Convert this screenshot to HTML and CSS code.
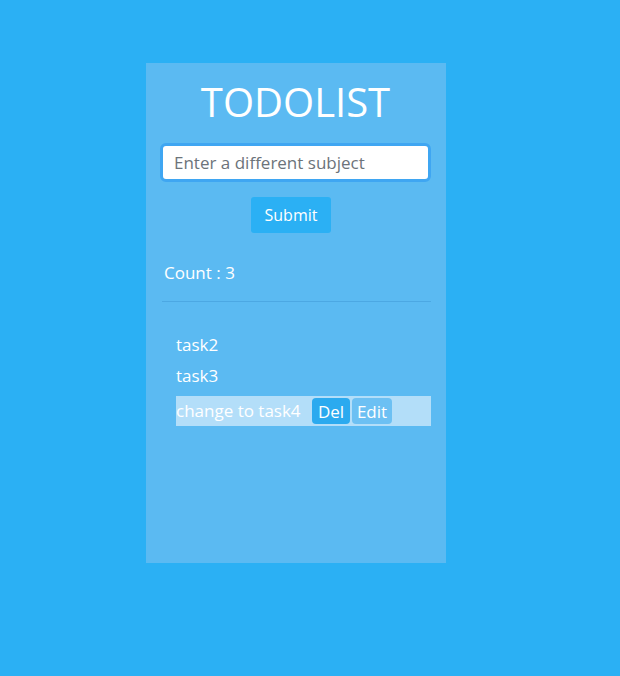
FILE: index.html
```html
<!DOCTYPE html>
<html>
<head>
<meta charset="utf-8">
<link rel="stylesheet" href="styles.css">
</head>
<body>
<div class="card">
  <h1 class="title">TODOLIST</h1>
  <input class="subject" type="text" placeholder="Enter a different subject">
  <div class="actions"><button class="btn btn-submit">Submit</button></div>
  <p class="count">Count : 3</p>
  <hr class="divider">
  <ul class="tasks">
    <li class="task">task2</li>
    <li class="task">task3</li>
    <li class="task task-active">change to task4 <button class="btn btn-del">Del</button><button class="btn btn-edit">Edit</button></li>
  </ul>
</div>
</body>
</html>
```
FILE: styles.css
```css
html, body {
  margin: 0;
  padding: 0;
  background: #2bb0f4;
  font-family: "Open Sans", sans-serif;
  height: 100%;
}
body {
  padding-top: 63px;
  box-sizing: border-box;
}
.card {
  width: 300px;
  height: 500px;
  margin-left: 146px;
  background: #5bbaf2;
  box-sizing: border-box;
  padding: 14px 15px 0 14px;
  color: #fff;
}
.title {
  margin: 0;
  text-align: center;
  font-size: 40px;
  font-weight: 400;
  line-height: 50px;
  height: 52px;
}
.subject {
  display: block;
  width: 271px;
  height: 39px;
  box-sizing: border-box;
  border: 3px solid #3fa6f2;
  border-radius: 6px;
  padding: 0 11px;
  font-family: inherit;
  font-size: 17px;
  outline: none;
  margin: 14px 0 0 0;
}
.subject::placeholder {
  color: #6c737a;
}
.actions {
  display: flex;
  justify-content: center;
  margin-top: 15px;
  padding-right: 9px;
}
.btn {
  font-family: inherit;
  border: none;
  color: #fff;
  cursor: pointer;
}
.btn-submit {
  background: #2bb0f4;
  width: 80px;
  height: 36px;
  border-radius: 3px;
  font-size: 16px;
}
.count {
  margin: 30px 0 0 4px;
  font-size: 17px;
  line-height: 20px;
}
.divider {
  margin: 18px 0 0 2px;
  border: none;
  border-top: 1px solid #4ca8e3;
  height: 0;
}
.tasks {
  list-style: none;
  margin: 32px 0 0 0;
  padding: 0 0 0 16px;
}
.task {
  font-size: 17px;
  line-height: 22px;
  margin-bottom: 9px;
}
.task-active {
  background: #b3def9;
  height: 30px;
  display: flex;
  align-items: center;
  white-space: pre;
}
.btn-del, .btn-edit {
  height: 26px;
  border-radius: 4px;
  font-size: 17px;
  padding: 0;
  margin-right: 2px;
}
.btn-del {
  background: #2baaef;
  width: 38px;
  margin-left: 7px;
}
.btn-edit {
  background: #6cc0f3;
  width: 40px;
}
```
